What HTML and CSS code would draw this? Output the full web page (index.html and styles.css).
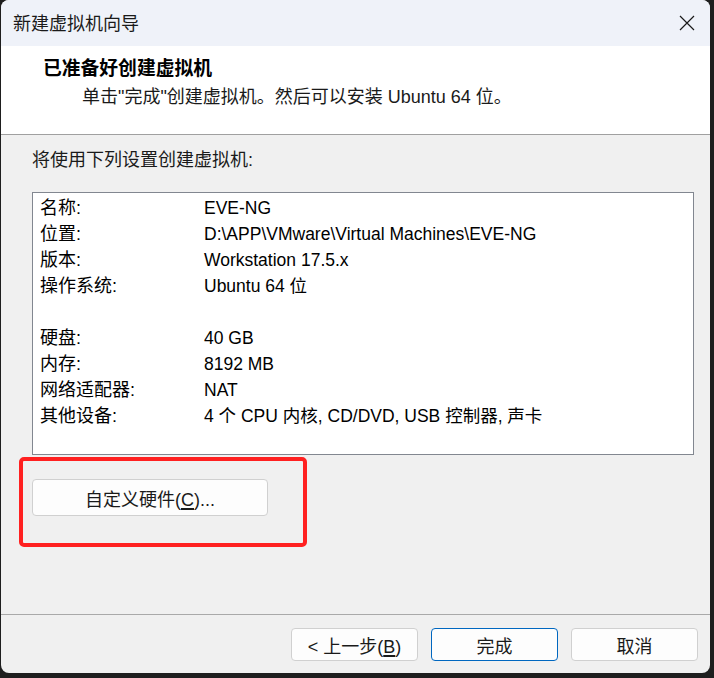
FILE: index.html
```html
<!DOCTYPE html>
<html lang="zh-CN">
<head>
<meta charset="utf-8">
<title>新建虚拟机向导</title>
<link rel="stylesheet" href="styles.css">
</head>
<body>
<div class="window">
  <div class="titlebar">
    <span class="title">新建虚拟机向导</span>
    <span class="close">
      <svg width="16" height="16" viewBox="0 0 16 16"><path d="M1 1 L15 15 M15 1 L1 15" stroke="#1a1a1a" stroke-width="1.2" fill="none"/></svg>
    </span>
  </div>
  <div class="header">
    <div class="heading">已准备好创建虚拟机</div>
    <div class="sub">单击"完成"创建虚拟机。然后可以安装 Ubuntu 64 位。</div>
  </div>
  <div class="content">
    <div class="intro">将使用下列设置创建虚拟机:</div>
    <div class="listbox">
      <div class="row"><span class="lbl">名称:</span><span class="val">EVE-NG</span></div>
      <div class="row"><span class="lbl">位置:</span><span class="val">D:\APP\VMware\Virtual Machines\EVE-NG</span></div>
      <div class="row"><span class="lbl">版本:</span><span class="val">Workstation 17.5.x</span></div>
      <div class="row"><span class="lbl">操作系统:</span><span class="val">Ubuntu 64 位</span></div>
      <div class="row"><span class="lbl"></span><span class="val"></span></div>
      <div class="row"><span class="lbl">硬盘:</span><span class="val">40 GB</span></div>
      <div class="row"><span class="lbl">内存:</span><span class="val">8192 MB</span></div>
      <div class="row"><span class="lbl">网络适配器:</span><span class="val">NAT</span></div>
      <div class="row"><span class="lbl">其他设备:</span><span class="val">4 个 CPU 内核, CD/DVD, USB 控制器, 声卡</span></div>
    </div>
    <div class="custom-wrap">
      <button class="btn custom">自定义硬件(<u>C</u>)...</button>
      <div class="highlight"></div>
    </div>
  </div>
  <div class="footer">
    <button class="btn">&lt; 上一步(<u>B</u>)</button>
    <button class="btn primary">完成</button>
    <button class="btn">取消</button>
  </div>
</div>
</body>
</html>
```
FILE: styles.css
```css
html, body {
  margin: 0;
  padding: 0;
  background: #1e1e1e;
  width: 714px;
  height: 678px;
  overflow: hidden;
}
body {
  font-family: "Liberation Sans", "Noto Sans CJK SC", sans-serif;
  font-size: 18px;
  color: #000;
  padding-left: 1px;
}
.window {
  width: 709px;
  height: 673px;
  background: #f0f0f0;
  border-radius: 8px;
  overflow: hidden;
  display: flex;
  flex-direction: column;
}
.titlebar {
  height: 46px;
  background: #eff2f9;
  display: flex;
  align-items: center;
  justify-content: space-between;
  padding: 0 15px 0 12px;
  flex: none;
}
.title {
  color: #1a1a1a;
  font-size: 18px;
  position: relative;
  top: -1px;
}
.close {
  display: flex;
  width: 16px;
  height: 16px;
}
.header {
  background: #fff;
  border-bottom: 1px solid #a0a0a0;
  padding: 0 0 0 42px;
  flex: none;
  box-sizing: border-box;
  height: 89px;
}
.heading {
  font-weight: bold;
  font-size: 18.8px;
  line-height: 24px;
  margin-top: 11px;
}
.sub {
  line-height: 24px;
  margin-top: 4px;
  padding-left: 39px;
  color: #1a1a1a;
}
.content {
  flex: 1;
  padding: 12px 0 0 31px;
}
.intro {
  line-height: 26px;
  margin-bottom: 19px;
  color: #1a1a1a;
}
.listbox {
  width: 662px;
  height: 263px;
  box-sizing: border-box;
  background: #fff;
  border: 1px solid #828790;
  padding: 2px 0 0 7px;
}
.row {
  display: grid;
  grid-template-columns: 164px 1fr;
  height: 26px;
  line-height: 26px;
}
.val {
  font-size: 17.5px;
}
.custom-wrap {
  position: relative;
  margin-top: 24px;
  width: 236px;
}
.btn {
  font-family: "Liberation Sans", "Noto Sans CJK SC", sans-serif;
  font-size: 18px;
  color: #1a1a1a;
  background: #fdfdfd;
  border: 1px solid #d0d0d0;
  border-radius: 4px;
  padding: 0;
  margin: 0;
}
.btn u {
  text-underline-offset: 2px;
  text-decoration-thickness: 1.5px;
}
.custom {
  width: 236px;
  height: 37px;
  display: block;
}
.highlight {
  position: absolute;
  left: -13px;
  top: -22px;
  width: 288px;
  height: 90px;
  box-sizing: border-box;
  border: 4px solid #ff2020;
  border-radius: 5px;
  pointer-events: none;
}
.footer {
  flex: none;
  height: 59px;
  box-sizing: border-box;
  border-top: 1px solid #a9a9a9;
  display: flex;
  justify-content: flex-end;
  gap: 13px;
  padding: 13px 12px 0 0;
}
.footer .btn {
  width: 127px;
  height: 33px;
}
.footer .primary {
  border-color: #0067c0;
}
```
